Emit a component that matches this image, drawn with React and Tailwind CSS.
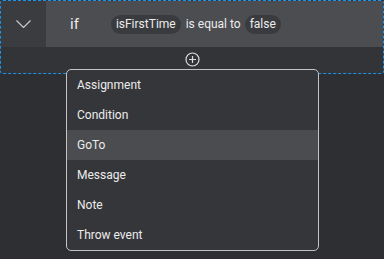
import { useState } from "react";

const items = ["Assignment", "Condition", "GoTo", "Message", "Note", "Throw event"];

export default function App() {
  const [hovered] = useState("GoTo");

  return (
    <div className="relative w-[384px] h-[259px] bg-[#2e2f32] text-[#ececec] overflow-hidden" style={{ fontFamily: "Roboto, 'Liberation Sans', sans-serif" }}>
      {/* condition block */}
      <div className="h-[74px] border border-dashed border-[#1b93e6] rounded-[3px] flex flex-col bg-[#333438]">
        <div className="h-[46px] flex">
          <div className="w-[45px] bg-[#3b3c40] flex items-center justify-center">
            <svg width="15" height="8" viewBox="0 0 15 8" fill="none">
              <path d="M0.5 0.5l7 7 7-7" stroke="#c9c9c9" strokeWidth="1.2" />
            </svg>
          </div>
          <div className="flex-1 bg-[#4b4d51] flex items-center pl-[24px] text-[12px]">
            <span className="text-[15px] mr-[32px]">if</span>
            <span className="bg-[#3a3b3f] rounded-full px-[5px] h-[19px] flex items-center">isFirstTime</span>
            <span className="ml-[5px] mr-[4px]">is equal to</span>
            <span className="bg-[#3a3b3f] rounded-full px-[5px] h-[19px] flex items-center">false</span>
          </div>
        </div>
        <div className="flex-1 flex justify-center pt-[5px]">
          <svg width="15" height="15" viewBox="0 0 15 15" fill="none">
            <circle cx="7.5" cy="7.5" r="6.5" stroke="#dcdcdc" strokeWidth="1.2" />
            <path d="M7.5 4v7M4 7.5h7" stroke="#dcdcdc" strokeWidth="1.2" />
          </svg>
        </div>
      </div>

      {/* add menu */}
      <div className="absolute left-[66px] top-[69px] w-[253px] bg-[#35363a] border border-[#c4c4c4] rounded-[5px] overflow-hidden text-[12px]">
        {items.map((item) => (
          <div
            key={item}
            className={`h-[30px] flex items-center pl-[10px] ${item === hovered ? "bg-[#4a4c50]" : ""}`}
          >
            {item}
          </div>
        ))}
      </div>
    </div>
  );
}
